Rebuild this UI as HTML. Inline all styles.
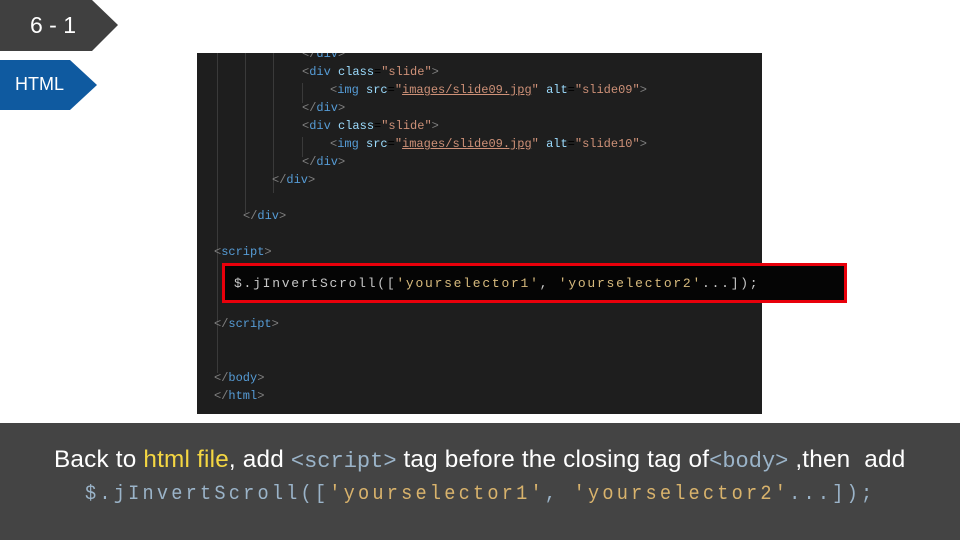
<!DOCTYPE html>
<html><head><meta charset="utf-8"><style>
*{margin:0;padding:0;box-sizing:border-box}
body{width:960px;height:540px;background:#fff;position:relative;overflow:hidden;font-family:"Liberation Sans",sans-serif}
.tag1{position:absolute;left:0;top:0;width:118px;height:51px;background:#404040;clip-path:polygon(0 0,92px 0,118px 25px,92px 51px,0 51px);color:#fff;font-size:23px}
.tag1 span{position:absolute;left:30px;top:12px;white-space:pre}
.tag2{position:absolute;left:0;top:60px;width:97px;height:50px;background:#0f5aa0;clip-path:polygon(0 0,70px 0,97px 25px,70px 50px,0 50px);color:#fff;font-size:18px}
.tag2 span{position:absolute;left:15px;top:14px}
.code{position:absolute;left:197px;top:53px;width:565px;height:361px;background:#1e1e1e;font-family:"Liberation Mono",monospace;font-size:12px;overflow:hidden}
.l{position:absolute;white-space:pre;line-height:14px}
.t{color:#569cd6}.p{color:#808080}.a{color:#9cdcfe}.s{color:#ce9178}.u{text-decoration:underline}
.g{position:absolute;width:1px;background:#3a3a3a}
.box{position:absolute;left:222px;top:263px;width:625px;height:40px;background:#050505;border:3px solid #e8000b}
.box span{position:absolute;left:9px;top:10px;font-family:"Liberation Mono",monospace;font-size:13px;letter-spacing:1.75px;color:#c8c8c8;white-space:pre}
.box b{font-weight:normal;color:#d7ba7d}
.bar{position:absolute;left:0;top:423px;width:960px;height:117px;background:#444}
.l1{position:absolute;left:54px;top:446px;color:#fff;font-size:24.3px;white-space:nowrap;letter-spacing:0.2px}
.m{font-family:"Liberation Mono",monospace;color:#9bb4c9;font-size:22px;letter-spacing:0}
.y{color:#f5d742}
.l2{position:absolute;left:85px;top:483px;font-family:"Liberation Mono",monospace;font-size:20px;letter-spacing:3.45px;color:#9bb4c9;white-space:pre;transform-origin:0 0;transform:scaleX(0.93)}
.l2 b{font-weight:normal;color:#d9b36c}
</style></head><body>
<div class="tag1"><span>6 - 1</span></div>
<div class="tag2"><span>HTML</span></div>
<div class="code">
<div class="g" style="left:20px;top:0;height:320px"></div>
<div class="g" style="left:48px;top:0;height:160px"></div>
<div class="g" style="left:76px;top:0;height:140px"></div>
<div class="g" style="left:105px;top:30px;height:20px"></div>
<div class="g" style="left:105px;top:84px;height:20px"></div>
<div class="l" style="left:105px;top:-6px"><span class="p">&lt;/</span><span class="t">div</span><span class="p">&gt;</span></div>
<div class="l" style="left:105px;top:12px"><span class="p">&lt;</span><span class="t">div</span> <span class="a">class</span>=<span class="s">"slide"</span><span class="p">&gt;</span></div>
<div class="l" style="left:133px;top:30px"><span class="p">&lt;</span><span class="t">img</span> <span class="a">src</span>=<span class="s">"<span class="u">images/slide09.jpg</span>"</span> <span class="a">alt</span>=<span class="s">"slide09"</span><span class="p">&gt;</span></div>
<div class="l" style="left:105px;top:48px"><span class="p">&lt;/</span><span class="t">div</span><span class="p">&gt;</span></div>
<div class="l" style="left:105px;top:66px"><span class="p">&lt;</span><span class="t">div</span> <span class="a">class</span>=<span class="s">"slide"</span><span class="p">&gt;</span></div>
<div class="l" style="left:133px;top:84px"><span class="p">&lt;</span><span class="t">img</span> <span class="a">src</span>=<span class="s">"<span class="u">images/slide09.jpg</span>"</span> <span class="a">alt</span>=<span class="s">"slide10"</span><span class="p">&gt;</span></div>
<div class="l" style="left:105px;top:102px"><span class="p">&lt;/</span><span class="t">div</span><span class="p">&gt;</span></div>
<div class="l" style="left:75px;top:120px"><span class="p">&lt;/</span><span class="t">div</span><span class="p">&gt;</span></div>
<div class="l" style="left:46px;top:156px"><span class="p">&lt;/</span><span class="t">div</span><span class="p">&gt;</span></div>
<div class="l" style="left:17px;top:192px"><span class="p">&lt;</span><span class="t">script</span><span class="p">&gt;</span></div>
<div class="l" style="left:17px;top:264px"><span class="p">&lt;/</span><span class="t">script</span><span class="p">&gt;</span></div>
<div class="l" style="left:17px;top:318px"><span class="p">&lt;/</span><span class="t">body</span><span class="p">&gt;</span></div>
<div class="l" style="left:17px;top:336px"><span class="p">&lt;/</span><span class="t">html</span><span class="p">&gt;</span></div>
</div>
<div class="box"><span>$.jInvertScroll([<b>'yourselector1'</b>, <b>'yourselector2'</b>...]);</span></div>
<div class="bar"></div>
<div class="l1">Back to <span class="y">html file</span>, add <span class="m">&lt;script&gt;</span> tag before the closing tag of<span class="m">&lt;body&gt;</span> ,then&nbsp; add</div>
<div class="l2">$.jInvertScroll([<b>'yourselector1'</b>, <b>'yourselector2'</b>...]);</div>
</body></html>
